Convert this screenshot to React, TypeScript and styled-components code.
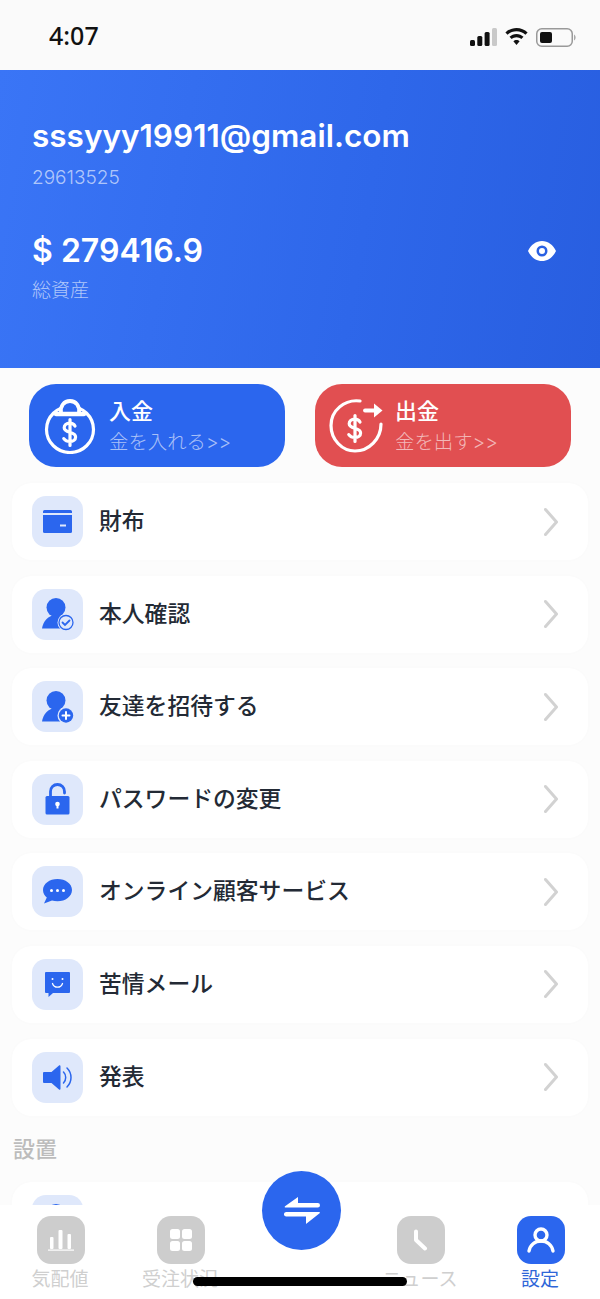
import React from "react";
import styled, { createGlobalStyle } from "styled-components";

const BLUE = "#2b66ee";

const GlobalStyle = createGlobalStyle`
  html, body {
    margin: 0;
    padding: 0;
    background: #fcfcfc;
  }
  * {
    box-sizing: border-box;
  }
`;

const Page = styled.div`
  position: relative;
  width: 600px;
  height: 1299px;
  overflow: hidden;
  background: #fcfcfc;
  font-family: Inter, "Noto Sans CJK JP", sans-serif;
`;

const StatusBar = styled.div`
  height: 70px;
  background: #fafafa;
  display: flex;
  align-items: center;
  justify-content: space-between;
  padding: 4px 24px 0 49px;
`;

const Clock = styled.div`
  margin-top: -4px;
  font-family: "Noto Sans", sans-serif;
  font-size: 25px;
  font-weight: 500;
  color: #111;
`;

const StatusIcons = styled.div`
  display: flex;
  align-items: center;
  gap: 8px;
`;

const Header = styled.div`
  height: 298px;
  padding: 48px 32px 0;
  color: #fff;
  background: linear-gradient(100deg, #3a75f6 0%, #2e67ea 60%, #285ee0 100%);
`;

const Email = styled.div`
  font-size: 31.5px;
  font-weight: 600;
  line-height: 36px;
`;

const Uid = styled.div`
  margin-top: 12px;
  font-size: 19px;
  font-weight: 300;
  line-height: 24px;
  color: rgba(255, 255, 255, 0.62);
`;

const BalanceRow = styled.div`
  margin-top: 43px;
  display: flex;
  align-items: center;
  justify-content: space-between;
  padding-right: 12px;
`;

const Balance = styled.div`
  font-size: 32px;
  font-weight: 600;
  line-height: 36px;
`;

const BalanceLabel = styled.div`
  margin-top: 10px;
  font-size: 19px;
  font-weight: 300;
  line-height: 24px;
  color: rgba(255, 255, 255, 0.62);
`;

const Actions = styled.div`
  display: flex;
  justify-content: space-between;
  padding: 16px 29px;
`;

const ActionButton = styled.div<{ $bg: string }>`
  width: 256px;
  height: 83px;
  border-radius: 27px;
  background: ${(props) => props.$bg};
  display: flex;
  align-items: center;
  padding-left: 14px;
  color: #fff;
`;

const ActionIconSlot = styled.div`
  width: 66px;
  flex-shrink: 0;
  display: flex;
`;

const ActionText = styled.div`
  display: flex;
  flex-direction: column;
  gap: 3px;
  padding-top: 1px;
`;

const ActionTitle = styled.div`
  font-size: 22px;
  font-weight: 500;
  line-height: 28px;
`;

const ActionSub = styled.div`
  font-size: 19.4px;
  font-weight: 300;
  line-height: 28px;
  color: rgba(255, 255, 255, 0.6);
`;

const List = styled.div`
  display: flex;
  flex-direction: column;
  gap: 15.6px;
  padding: 0 12px;
`;

const Row = styled.div`
  height: 77px;
  border-radius: 20px;
  background: #fff;
  box-shadow: 0 0 10px rgba(0, 0, 0, 0.012);
  display: flex;
  align-items: center;
  padding: 0 28px 0 20px;
`;

const IconTile = styled.div`
  width: 51px;
  height: 51px;
  border-radius: 14px;
  background: #dfe8fb;
  display: flex;
  align-items: center;
  justify-content: center;
  flex-shrink: 0;
`;

const RowLabel = styled.div`
  flex: 1;
  margin: 0 0 4px 16px;
  font-size: 22.8px;
  font-weight: 500;
  color: #232a35;
`;

const SectionTitle = styled.div`
  margin: 19px 0 19px 13px;
  font-size: 22px;
  font-weight: 500;
  line-height: 28px;
  color: #bcbcbc;
`;

const TabBar = styled.div`
  position: absolute;
  left: 0;
  right: 0;
  bottom: 0;
  height: 94px;
  background: #fff;
  display: grid;
  grid-template-columns: repeat(5, 120px);
  padding: 11px 0 0 1px;
`;

const Tab = styled.div`
  display: flex;
  flex-direction: column;
  align-items: center;
`;

const TabTile = styled.div<{ $active?: boolean }>`
  width: 48px;
  height: 48px;
  border-radius: 14px;
  background: ${(props) => (props.$active ? BLUE : "#cdcdcd")};
  display: flex;
  align-items: center;
  justify-content: center;
`;

const TabLabel = styled.div<{ $active?: boolean }>`
  margin: 3px 0 0 -2px;
  font-size: 19px;
  line-height: 26px;
  white-space: nowrap;
  font-weight: 400;
  color: ${(props) => (props.$active ? "#2f66d8" : "#cfcfcf")};
`;

const Fab = styled.div`
  position: absolute;
  left: 262px;
  top: 1171px;
  width: 79px;
  height: 79px;
  border-radius: 50%;
  background: ${BLUE};
  display: flex;
  align-items: center;
  justify-content: center;
`;

const HomeIndicator = styled.div`
  position: absolute;
  left: 193px;
  top: 1277px;
  width: 214px;
  height: 9px;
  border-radius: 5px;
  background: #000;
`;

const Chevron = () => (
  <svg width="16" height="30" viewBox="0 0 16 30" fill="none">
    <path d="M1.500 2.500l11 12.500-11 12.500" stroke="#d2d2d2" strokeWidth="3" strokeLinecap="round" strokeLinejoin="round" />
  </svg>
);

const SignalIcon = () => (
  <svg width="27" height="18" viewBox="0 0 27 18">
    <rect x="0" y="12" width="5" height="6" rx="1.500" fill="#111" />
    <rect x="7.300" y="8" width="5" height="10" rx="1.500" fill="#111" />
    <rect x="14.600" y="4" width="5" height="14" rx="1.500" fill="#111" />
    <rect x="22" y="0" width="5" height="18" rx="1.500" fill="#c9c9c9" />
  </svg>
);

const WifiIcon = () => (
  <svg width="23" height="18" viewBox="0 0 23 18" fill="#111">
    <path d="M11.500 0C7.200 0 3.300 1.700.4 4.400l2.200 2.300C4.900 4.500 8 3.200 11.500 3.200s6.600 1.300 8.900 3.500l2.200-2.300C19.700 1.700 15.800 0 11.500 0z" />
    <path d="M11.500 6c-2.700 0-5.200 1.100-7 2.800l2.200 2.300c1.300-1.200 3-1.900 4.800-1.900s3.500.7 4.800 1.900l2.200-2.300C16.700 7.100 14.200 6 11.500 6z" />
    <path d="M11.500 12c-1.200 0-2.300.5-3.100 1.200l3.100 3.800 3.100-3.800c-.8-.7-1.900-1.200-3.100-1.200z" />
  </svg>
);

const BatteryIcon = () => (
  <svg width="40" height="19" viewBox="0 0 40 19">
    <rect x="0.750" y="0.750" width="35.500" height="17.500" rx="5" fill="none" stroke="#999" strokeWidth="1.500" />
    <rect x="4" y="4" width="12" height="11" rx="2" fill="#111" />
    <path d="M38 6.500c1 .5 1.600 1.600 1.600 3s-.6 2.500-1.600 3z" fill="#aaa" />
  </svg>
);

const EyeIcon = () => (
  <svg width="28" height="20" viewBox="0 0 28 20">
    <path
      fillRule="evenodd"
      fill="#fff"
      d="M14 0C8 0 3 3.800 0 10c3 6.200 8 10 14 10s11-3.800 14-10C25 3.800 20 0 14 0zm0 15.500a5.500 5.500 0 1 1 0-11 5.500 5.500 0 0 1 0 11zM14 7a3 3 0 1 0 0 6 3 3 0 0 0 0-6z"
    />
  </svg>
);

const DollarSign = ({ y }: { y: number }) => (
  <path
    transform={`translate(0 ${y})`}
    d="M32 5c-1-1.800-3-2.800-5.200-2.800-3.500 0-5.600 1.900-5.600 4.500 0 5.900 11.400 3.200 11.400 9.300 0 2.700-2.400 4.500-5.800 4.500-2.500 0-4.700-1.100-6-2.900M27 -1.500v26"
  />
);

const DepositIcon = () => (
  <svg width="54" height="56" viewBox="0 0 54 56" fill="none" stroke="#fff" strokeWidth="3.200" strokeLinecap="round">
    <ellipse cx="27" cy="31.500" rx="23.500" ry="23" />
    <path d="M18 15c-1-7 3-12 9-12s10 5 9 12" strokeWidth="3.800" fill="#2b66ee" />
    <path d="M13 16h28" strokeWidth="4.400" />
    <DollarSign y={23} />
  </svg>
);

const WithdrawIcon = () => (
  <svg width="56" height="56" viewBox="0 0 56 56" fill="none" stroke="#fff" strokeWidth="3.200" strokeLinecap="round">
    <path d="M31 3C15.500 1 2 12.500 2 27.500 2 41.500 13 53 26 53c14 0 26-12 26-27" />
    <path d="M36 12.500h11" strokeWidth="3.800" />
    <path d="M45 5.500l8.500 7-8.500 7z" fill="#fff" stroke="none" />
    <g transform="translate(-1 0)">
      <DollarSign y={19} />
    </g>
  </svg>
);

const WalletIcon = () => (
  <svg width="29" height="23" viewBox="0 0 29 23" fill={BLUE}>
    <path d="M1.500 0h26A1.500 1.500 0 0 1 29 1.500V3H0V1.500A1.500 1.500 0 0 1 1.500 0z" />
    <path d="M0 5h29v16.500a1.500 1.500 0 0 1-1.500 1.500h-26A1.500 1.500 0 0 1 0 21.500z" />
    <rect x="17" y="14.500" width="6" height="2" fill="#dfe8fb" />
  </svg>
);

const PersonBase = () => (
  <>
    <circle cx="15" cy="10.500" r="9.500" fill={BLUE} />
    <path d="M1 31.500C2 24.500 7 18 15 18c3 0 6 1 8 3v10.500z" fill={BLUE} />
  </>
);

const VerifyIcon = () => (
  <svg width="34" height="34" viewBox="0 0 34 34">
    <PersonBase />
    <circle cx="25" cy="25.500" r="8.500" fill="#dfe8fb" />
    <circle cx="25" cy="25.500" r="7" fill="#dfe8fb" stroke={BLUE} strokeWidth="1.300" />
    <path d="M21.500 25.500l2.500 2.500 4.500-4.500" fill="none" stroke={BLUE} strokeWidth="1.800" strokeLinecap="round" />
  </svg>
);

const InviteIcon = () => (
  <svg width="34" height="34" viewBox="0 0 34 34">
    <PersonBase />
    <circle cx="25" cy="25.500" r="8.500" fill="#dfe8fb" />
    <circle cx="25" cy="25.500" r="7.200" fill={BLUE} />
    <path d="M21.500 25.500h7M25 22v7" stroke="#fff" strokeWidth="2" strokeLinecap="round" />
  </svg>
);

const LockIcon = () => (
  <svg width="25" height="32" viewBox="0 0 25 32">
    <path d="M5.500 14V8.500c0-4 3-7 7-7s7 3 7 7V10" fill="none" stroke={BLUE} strokeWidth="2.800" strokeLinecap="round" />
    <rect x="0.500" y="13" width="24" height="18.500" rx="1.500" fill={BLUE} />
    <circle cx="12.500" cy="21" r="2.300" fill="#fff" />
    <rect x="11.500" y="21.500" width="2" height="4" fill="#fff" />
  </svg>
);

const ChatIcon = () => (
  <svg width="29" height="25" viewBox="0 0 29 25">
    <path d="M14.500 0C6.500 0 0 4.800 0 11c0 3 1.500 5.600 3.800 7.600L1 24.500l8-2.900c1.700.5 3.500.7 5.500.7C22.500 22.300 29 17.300 29 11S22.500 0 14.500 0z" fill={BLUE} />
    <circle cx="8.500" cy="11.500" r="1.500" fill="#fff" />
    <circle cx="14.500" cy="11.500" r="1.500" fill="#fff" />
    <circle cx="20.500" cy="11.500" r="1.500" fill="#fff" />
  </svg>
);

const FeedbackIcon = () => (
  <svg width="25" height="25" viewBox="0 0 25 25">
    <path d="M1 0h23a1 1 0 0 1 1 1v19a1 1 0 0 1-1 1H8l-4.500 4v-4H1a1 1 0 0 1-1-1V1a1 1 0 0 1 1-1z" fill={BLUE} />
    <circle cx="7.500" cy="7" r="1" fill="#fff" />
    <circle cx="17.500" cy="7" r="1" fill="#fff" />
    <path d="M7.500 11.500c.8 2.500 2.700 3.700 5 3.700s4.200-1.200 5-3.700" fill="none" stroke="#fff" strokeWidth="1.300" strokeLinecap="round" />
  </svg>
);

const SpeakerIcon = () => (
  <svg width="29" height="25" viewBox="0 0 29 25">
    <path d="M1 7h7.500L16 0.500c.6-.5 1.500 0 1.500.8v22.400c0 .8-.9 1.300-1.500.8L8.500 18H1a1 1 0 0 1-1-1V8a1 1 0 0 1 1-1z" fill={BLUE} />
    <path d="M20.500 7c1.500 1.500 2.200 3.400 2.200 5.500s-.7 4-2.200 5.500M24 3c2.500 2.500 4 5.800 4 9.500s-1.500 7-4 9.500" fill="none" stroke={BLUE} strokeWidth="1.500" strokeLinecap="round" />
  </svg>
);

const ChartIcon = () => (
  <svg width="26" height="22" viewBox="0 0 26 22" fill="#fff">
    <rect x="2" y="8" width="3.500" height="12" rx="1" />
    <rect x="10.500" y="1" width="4" height="19" rx="1" />
    <rect x="19.500" y="5" width="3.500" height="15" rx="1" />
    <rect x="0" y="20.500" width="26" height="1.200" />
  </svg>
);

const GridIcon = () => (
  <svg width="22" height="22" viewBox="0 0 22 22" fill="#fff">
    <rect x="0" y="0" width="10" height="10" rx="2.500" />
    <rect x="12" y="0" width="10" height="10" rx="2.500" />
    <rect x="0" y="12" width="10" height="10" rx="2.500" />
    <rect x="12" y="12" width="10" height="10" rx="2.500" />
  </svg>
);

const ClockHandIcon = () => (
  <svg width="16" height="22" viewBox="0 0 16 22" fill="none">
    <path d="M3 2.500v8.500l9 8.500" stroke="#fff" strokeWidth="4" strokeLinecap="round" strokeLinejoin="round" />
  </svg>
);

const UserIcon = () => (
  <svg width="28" height="26" viewBox="0 0 28 26" fill="none" stroke="#fff" strokeWidth="3.400" strokeLinecap="round">
    <circle cx="14" cy="8" r="6" />
    <path d="M2 24c1-6 6-10 12-10s11 4 12 10" />
  </svg>
);

const SwapIcon = () => (
  <svg width="36" height="27" viewBox="0 0 36 27" fill="#fff">
    <path d="M14 0L1 9.200c-.6.500-.3 1.300.4 1.300H33.800a2.200 2.200 0 0 0 0-4.400H14z" />
    <path d="M2.200 15h33c.7 0 1 .8.400 1.300L22 27v-7.500H2.200a2.250 2.250 0 0 1 0-4.500z" />
  </svg>
);

const menuItems = [
  { label: "財布", icon: <WalletIcon /> },
  { label: "本人確認", icon: <VerifyIcon /> },
  { label: "友達を招待する", icon: <InviteIcon /> },
  { label: "パスワードの変更", icon: <LockIcon /> },
  { label: "オンライン顧客サービス", icon: <ChatIcon /> },
  { label: "苦情メール", icon: <FeedbackIcon /> },
  { label: "発表", icon: <SpeakerIcon /> },
];

export default function App() {
  return (
    <Page>
      <GlobalStyle />
      <StatusBar>
        <Clock>4:07</Clock>
        <StatusIcons>
          <SignalIcon />
          <WifiIcon />
          <BatteryIcon />
        </StatusIcons>
      </StatusBar>

      <Header>
        <Email>sssyyy19911@gmail.com</Email>
        <Uid>29613525</Uid>
        <BalanceRow>
          <Balance>$ 279416.9</Balance>
          <EyeIcon />
        </BalanceRow>
        <BalanceLabel>総資産</BalanceLabel>
      </Header>

      <Actions>
        <ActionButton $bg="#2b66ee">
          <ActionIconSlot>
            <DepositIcon />
          </ActionIconSlot>
          <ActionText>
            <ActionTitle>入金</ActionTitle>
            <ActionSub>金を入れる&gt;&gt;</ActionSub>
          </ActionText>
        </ActionButton>
        <ActionButton $bg="#e14f51">
          <ActionIconSlot>
            <WithdrawIcon />
          </ActionIconSlot>
          <ActionText>
            <ActionTitle>出金</ActionTitle>
            <ActionSub>金を出す&gt;&gt;</ActionSub>
          </ActionText>
        </ActionButton>
      </Actions>

      <List>
        {menuItems.map((item) => (
          <Row key={item.label}>
            <IconTile>{item.icon}</IconTile>
            <RowLabel>{item.label}</RowLabel>
            <Chevron />
          </Row>
        ))}
      </List>

      <SectionTitle>設置</SectionTitle>
      <List>
        <Row>
          <IconTile>
            <VerifyIcon />
          </IconTile>
        </Row>
      </List>

      <TabBar>
        <Tab>
          <TabTile>
            <ChartIcon />
          </TabTile>
          <TabLabel>気配値</TabLabel>
        </Tab>
        <Tab>
          <TabTile>
            <GridIcon />
          </TabTile>
          <TabLabel>受注状況</TabLabel>
        </Tab>
        <Tab />
        <Tab>
          <TabTile>
            <ClockHandIcon />
          </TabTile>
          <TabLabel>ニュース</TabLabel>
        </Tab>
        <Tab>
          <TabTile $active>
            <UserIcon />
          </TabTile>
          <TabLabel $active>設定</TabLabel>
        </Tab>
      </TabBar>

      <Fab>
        <SwapIcon />
      </Fab>
      <HomeIndicator />
    </Page>
  );
}
